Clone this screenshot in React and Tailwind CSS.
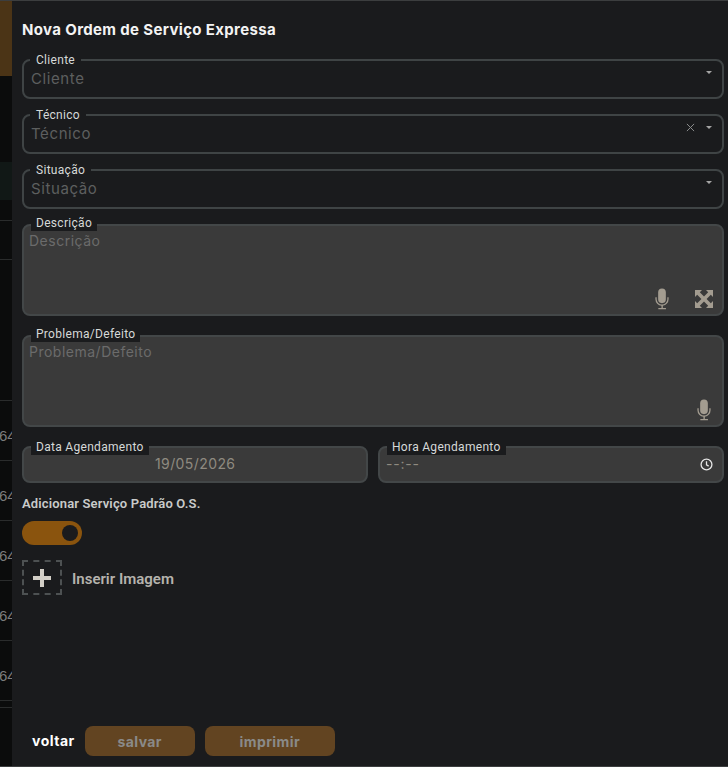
import React from "react";

const poppins = "font-['Inter','Noto_Sans',sans-serif]";
const fira = "font-['Roboto','Noto_Sans',sans-serif]";

function Mic({ className }) {
  return (
    <svg viewBox="0 0 24 24" className={className} fill="#a39c90">
      <path d="M12 .5a4.200 4.200 0 0 0-4.200 4.200v7.600a4.200 4.200 0 0 0 8.400 0V4.700A4.200 4.200 0 0 0 12 .5z" />
      <path d="M4.800 10h1.400v2.300a5.800 5.800 0 0 0 11.600 0V10h1.400v2.300a7.200 7.200 0 0 1-6.300 7.100v2.400h3.400v1.500H8v-1.500h3.400v-2.400a7.200 7.200 0 0 1-6.600-7.100z" />
    </svg>
  );
}

function Expand({ className }) {
  return (
    <svg viewBox="0 0 18 18" className={className} fill="#a39c90">
      <path d="M0 0h7L4.800 2.200 9 6.400l4.200-4.200L11 0h7v7l-2.200-2.200L11.600 9l4.200 4.200L18 11v7h-7l2.200-2.200L9 11.600l-4.200 4.200L7 18H0v-7l2.200 2.200L6.400 9 2.200 4.800 0 7z" />
    </svg>
  );
}

function SelectField({ label, x }) {
  return (
    <div className="relative h-10 rounded-lg border-2 border-[#3f4445]">
      <span className={`absolute left-[6px] -top-[8px] bg-[#1a1b1d] px-[6px] text-[12px] leading-[14px] tracking-[0.3px] text-[#d6d9d8] ${fira}`}>
        {label}
      </span>
      <span className={`absolute left-[7px] top-[9px] text-[15px] leading-[18px] tracking-[0.6px] text-[#5d5f5f] ${poppins}`}>
        {label}
      </span>
      {x && (
        <svg viewBox="0 0 10 10" className="absolute right-[27px] top-[7px] h-[9px] w-[9px]" stroke="#8b8d8d" strokeWidth="1.100" fill="none">
          <path d="M1 1l8 8M9 1l-8 8" />
        </svg>
      )}
      <span className="absolute right-[10px] top-[10px] h-0 w-0 border-x-[3px] border-t-[3px] border-x-transparent border-t-[#a5a5a5]" />
    </div>
  );
}

function AreaField({ label, children }) {
  return (
    <div className="relative h-[92px] rounded-lg border-2 border-[#434748] bg-[#3a3a3a]">
      <span className={`absolute left-[7px] -top-[10px] bg-[#1a1b1d] px-[5px] text-[12px] leading-[15px] tracking-[0.3px] text-[#d6d9d8] ${fira}`}>
        {label}
      </span>
      <span className={`absolute left-[5px] top-[6px] text-[14px] leading-[18px] tracking-[0.5px] text-[#6b6b6b] ${poppins}`}>
        {label}
      </span>
      {children}
    </div>
  );
}

function TimeField({ label, children }) {
  return (
    <div className="relative h-[37px] flex-1 rounded-lg border-2 border-[#434748] bg-[#3a3a3a]">
      <span className={`absolute left-[7px] -top-[8px] bg-[#1a1b1d] px-[5px] text-[12px] leading-[15px] tracking-[0.3px] text-[#d6d9d8] ${fira}`}>
        {label}
      </span>
      {children}
    </div>
  );
}

function StripRow() {
  return (
    <div className="relative h-[60px] overflow-hidden border-t border-[#2a2c2c]">
      <span className="absolute -left-[1px] top-[26px] font-['Liberation_Sans',sans-serif] text-[15px] leading-[17px] text-[#7c7c7c]">
        64
      </span>
    </div>
  );
}

export default function App() {
  return (
    <div className="flex h-[767px] w-[728px] flex-col overflow-hidden border-y border-[#3c3e3f] bg-[#0b0c0c]">
      <div className="flex min-h-0 flex-1">
        <div className="flex w-3 shrink-0 flex-col">
          <div className="h-[75px] bg-[#4b3416]" />
          <div className="h-[86px]" />
          <div className="h-[38px] bg-[#111816]" />
          <div className="h-[20px]" />
          <div className="h-[39px] border-t border-[#2a2c2c]" />
          <div className="h-[141px] border-t border-[#2a2c2c]" />
          <StripRow />
          <StripRow />
          <StripRow />
          <StripRow />
          <StripRow />
          <div className="h-[7px] border-t border-[#2a2c2c]" />
          <div className="border-t border-[#2a2c2c]" />
        </div>
        <div className="flex min-w-0 flex-1 flex-col bg-[#1a1b1d] pl-[10px] pr-[4px]">
          <h1 className={`mt-[19px] text-[15px] font-bold leading-5 tracking-[0.35px] text-[#f3f3f3] ${poppins}`}>
            Nova Ordem de Serviço Expressa
          </h1>
          <div className="mt-[19px] flex flex-col gap-[15px]">
            <SelectField label="Cliente" />
            <SelectField label="Técnico" x />
            <SelectField label="Situação" />
          </div>
          <div className="mt-[15px] flex flex-col gap-[19px]">
            <AreaField label="Descrição">
              <Mic className="absolute right-[49px] bottom-[4px] h-[22px] w-[22px]" />
              <Expand className="absolute right-[9px] bottom-[6px] h-[18px] w-[18px]" />
            </AreaField>
            <AreaField label="Problema/Defeito">
              <Mic className="absolute right-[7px] bottom-[4px] h-[22px] w-[22px]" />
            </AreaField>
          </div>
          <div className="mt-[19px] flex gap-[10px]">
            <TimeField label="Data Agendamento">
              <span className={`absolute left-[131px] top-[7px] text-[14px] leading-[18px] tracking-[0.4px] text-[#8f8a80] ${poppins}`}>
                19/05/2026
              </span>
            </TimeField>
            <TimeField label="Hora Agendamento">
              <span className={`absolute left-[6px] top-[7px] text-[14px] leading-[18px] tracking-[0.8px] text-[#8f8a80] ${poppins}`}>
                --:--
              </span>
              <svg viewBox="0 0 24 24" className="absolute right-[9px] top-[10px] h-[13px] w-[13px]" fill="none" stroke="#e6e6e6" strokeWidth="2.400">
                <circle cx="12" cy="12" r="10" />
                <path d="M12 6v6.500l4 2.500" />
              </svg>
            </TimeField>
          </div>
          <p className={`mt-[12px] text-[13px] font-semibold leading-[18px] tracking-[0.15px] text-[#c9cbca] ${fira}`}>
            Adicionar Serviço Padrão O.S.
          </p>
          <div className="mt-[8px] flex h-6 w-[60px] items-center justify-end rounded-full bg-[#8a540e] pr-[4px]">
            <span className="h-4 w-4 rounded-full bg-[#1a1b1d]" />
          </div>
          <div className="mt-[15px] flex items-center gap-[10px]">
            <div className="flex h-[35px] w-10 items-center justify-center border-2 border-dashed border-[#4d5152]">
              <svg viewBox="0 0 18 18" className="h-[18px] w-[18px]" fill="#d3cfc7">
                <path d="M7 0h4v7h7v4h-7v7H7v-7H0V7h7z" />
              </svg>
            </div>
            <span className={`relative top-[1px] text-[15px] font-semibold leading-5 text-[#b5b3ad] ${fira}`}>Inserir Imagem</span>
          </div>
          <div className="mt-auto mb-[10px] flex items-center gap-[10px] pl-[10px]">
            <span className={`text-[14px] font-bold leading-5 tracking-[0.5px] text-white ${poppins}`}>voltar</span>
            <button className={`h-[30px] w-[110px] rounded-lg bg-[#624421] text-[14px] font-bold tracking-[0.4px] text-[#8a8a88] ${poppins}`}>salvar</button>
            <button className={`h-[30px] w-[130px] rounded-lg bg-[#624421] text-[14px] font-bold tracking-[0.4px] text-[#8a8a88] ${poppins}`}>imprimir</button>
          </div>
        </div>
      </div>
    </div>
  );
}
